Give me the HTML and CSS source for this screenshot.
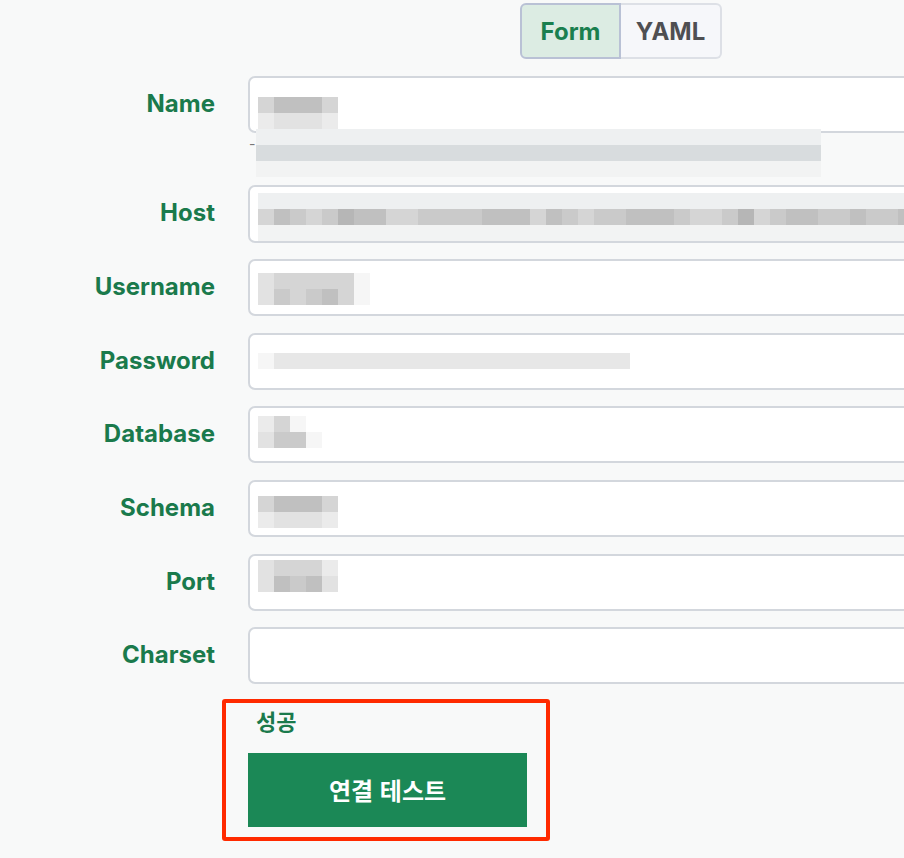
FILE: index.html
```html
<!DOCTYPE html>
<html lang="ko">
<head>
  <meta charset="UTF-8">
  <title>DB 연결 설정</title>
  <link rel="stylesheet" href="styles.css">
</head>
<body>
  <div class="page">
    <div class="mode-bar">
      <div class="mode-toggle">
        <button class="mode active">Form</button>
        <button class="mode">YAML</button>
      </div>
    </div>

    <div class="form">
      <div class="form-row">
        <label class="label">Name</label>
        <div>
          <div class="field">
            <div class="blur off-name">
              <div class="mrow"><span class="c s3"></span><span class="c s5"></span><span class="c s5"></span><span class="c s5"></span><span class="c s3"></span></div>
              <div class="mrow"><span class="c s1"></span><span class="c s2"></span><span class="c s2"></span><span class="c s2"></span><span class="c s1"></span></div>
            </div>
          </div>
          <div class="help">
            <span class="dash">-</span>
            <div class="mrow"><span class="bar h-light w565"></span></div>
            <div class="mrow"><span class="bar h-mid w565"></span></div>
            <div class="mrow"><span class="bar h-faint w565"></span></div>
          </div>
        </div>
      </div>

      <div class="form-row">
        <label class="label">Host</label>
        <div class="field tall">
          <div class="blur off-host">
            <div class="mrow"><span class="bar h-light wfull"></span></div>
            <div class="mrow"><span class="c s3"></span><span class="c s5"></span><span class="c s4"></span><span class="c s3"></span><span class="c s4"></span><span class="c s6"></span><span class="c s5"></span><span class="c s5"></span><span class="c s3"></span><span class="c s3"></span><span class="c s4"></span><span class="c s4"></span><span class="c s4"></span><span class="c s4"></span><span class="c s5"></span><span class="c s5"></span><span class="c s5"></span><span class="c s3"></span><span class="c s5"></span><span class="c s4"></span><span class="c s3"></span><span class="c s4"></span><span class="c s4"></span><span class="c s5"></span><span class="c s5"></span><span class="c s5"></span><span class="c s4"></span><span class="c s3"></span><span class="c s3"></span><span class="c s4"></span><span class="c s6"></span><span class="c s3"></span><span class="c s4"></span><span class="c s5"></span><span class="c s5"></span><span class="c s4"></span><span class="c s4"></span><span class="c s5"></span><span class="c s4"></span><span class="c s4"></span><span class="c s5"></span></div>
            <div class="mrow"><span class="bar h-faint wfull"></span></div>
          </div>
        </div>
      </div>

      <div class="form-row">
        <label class="label">Username</label>
        <div class="field">
          <div class="blur off-user">
            <div class="mrow"><span class="c s2"></span><span class="c s3"></span><span class="c s3"></span><span class="c s3"></span><span class="c s3"></span><span class="c s3"></span><span class="c s0"></span></div>
            <div class="mrow"><span class="c s2"></span><span class="c s4"></span><span class="c s3"></span><span class="c s4"></span><span class="c s5"></span><span class="c s3"></span><span class="c s0"></span></div>
          </div>
        </div>
      </div>

      <div class="form-row">
        <label class="label">Password</label>
        <div class="field">
          <div class="blur off-pass">
            <div class="mrow"><span class="c s0"></span><span class="bar h-pass w356"></span></div>
          </div>
        </div>
      </div>

      <div class="form-row">
        <label class="label">Database</label>
        <div class="field">
          <div class="blur off-db">
            <div class="mrow"><span class="c s1"></span><span class="c s3"></span><span class="c s0"></span></div>
            <div class="mrow"><span class="c s2"></span><span class="c s4"></span><span class="c s4"></span><span class="c s0"></span></div>
          </div>
        </div>
      </div>

      <div class="form-row">
        <label class="label">Schema</label>
        <div class="field">
          <div class="blur off-schema">
            <div class="mrow"><span class="c s3"></span><span class="c s5"></span><span class="c s5"></span><span class="c s5"></span><span class="c s3"></span></div>
            <div class="mrow"><span class="c s1"></span><span class="c s2"></span><span class="c s2"></span><span class="c s2"></span><span class="c s1"></span></div>
          </div>
        </div>
      </div>

      <div class="form-row">
        <label class="label">Port</label>
        <div class="field">
          <div class="blur off-port">
            <div class="mrow"><span class="c s2"></span><span class="c s3"></span><span class="c s3"></span><span class="c s3"></span><span class="c s1"></span></div>
            <div class="mrow"><span class="c s2"></span><span class="c s5"></span><span class="c s4"></span><span class="c s5"></span><span class="c s2"></span></div>
          </div>
        </div>
      </div>

      <div class="form-row">
        <label class="label">Charset</label>
        <div class="field"></div>
      </div>

      <div class="form-row">
        <span></span>
        <div class="actions">
          <div class="status">성공</div>
          <button class="test-btn">연결 테스트</button>
        </div>
      </div>
    </div>
  </div>

  <div class="highlight"></div>
</body>
</html>
```

FILE: styles.css
```css
html, body {
  margin: 0;
  height: 100%;
  overflow: hidden;
}
body {
  background: #f8f9f9;
  font-family: Inter, "Noto Sans CJK KR", sans-serif;
}
.page {
  padding-top: 3px;
}
.mode-bar {
  padding-left: 520px;
}
.mode-toggle {
  display: inline-flex;
}
.mode {
  height: 56px;
  width: 101px;
  font-family: Inter, sans-serif;
  font-size: 24px;
  font-weight: 700;
  color: #4f4f52;
  background: #f6f7fa;
  border: 2px solid #dde0e6;
  border-left: none;
  border-radius: 0 6px 6px 0;
  cursor: pointer;
}
.mode.active {
  color: #1a7f4f;
  background: #dcece3;
  border: 2px solid #b9c1d5;
  border-radius: 6px 0 0 6px;
}
.form {
  margin-top: 17px;
  display: flex;
  flex-direction: column;
  gap: 16.6px;
}
.form-row {
  display: grid;
  grid-template-columns: 215px 1fr;
  column-gap: 33px;
  align-items: start;
}
.label {
  text-align: right;
  line-height: 55px;
  font-size: 24px;
  font-weight: 700;
  color: #1a7a4c;
}
.field {
  box-sizing: border-box;
  height: 57px;
  width: 700px;
  background: #fff;
  border: 2px solid #d3d7dd;
  border-radius: 7px;
  overflow: hidden;
}
.field.tall {
  height: 58px;
}
.help {
  position: relative;
  height: 39px;
  margin-top: -4px;
  padding-left: 8px;
}
.dash {
  position: absolute;
  left: 1px;
  top: 6px;
  font-size: 14px;
  color: #777;
}

/* redacted values */
.blur {
  padding-left: 8px;
}
.off-name { margin-top: 19px; }
.off-host { margin-top: 6px; }
.off-user { margin-top: 12px; }
.off-pass { margin-top: 18px; }
.off-db { margin-top: 8px; }
.off-schema { margin-top: 14px; }
.off-port { margin-top: 4px; }
.mrow {
  display: flex;
  height: 16px;
}
.c {
  width: 16px;
  flex: none;
}
.s0 { background: #f6f6f6; }
.s1 { background: #ebebeb; }
.s2 { background: #e2e2e2; }
.s3 { background: #d5d5d5; }
.s4 { background: #cacaca; }
.s5 { background: #c0c0c0; }
.s6 { background: #b6b6b6; }
.bar { display: block; height: 16px; }
.h-light { background: #eef0f1; }
.h-mid { background: #d8dcde; }
.h-faint { background: #f2f3f3; }
.h-pass { background: #e7e7e7; }
.w565 { width: 565px; }
.w356 { width: 356px; }
.wfull { width: 700px; }

.actions {
  padding-top: 4px;
}
.status {
  padding-left: 8px;
  font-family: "Noto Sans CJK KR", sans-serif;
  font-size: 22px;
  font-weight: 700;
  color: #1a7a4c;
  line-height: 30px;
}
.test-btn {
  display: block;
  margin-top: 18px;
  width: 279px;
  height: 74px;
  border: none;
  background: #1b8856;
  color: #fff;
  font-family: "Noto Sans CJK KR", sans-serif;
  font-size: 24px;
  font-weight: 700;
  cursor: pointer;
}
.highlight {
  position: absolute;
  left: 222px;
  top: 699px;
  width: 320px;
  height: 134px;
  border: 4px solid #ff2a00;
  border-radius: 3px;
}
```
